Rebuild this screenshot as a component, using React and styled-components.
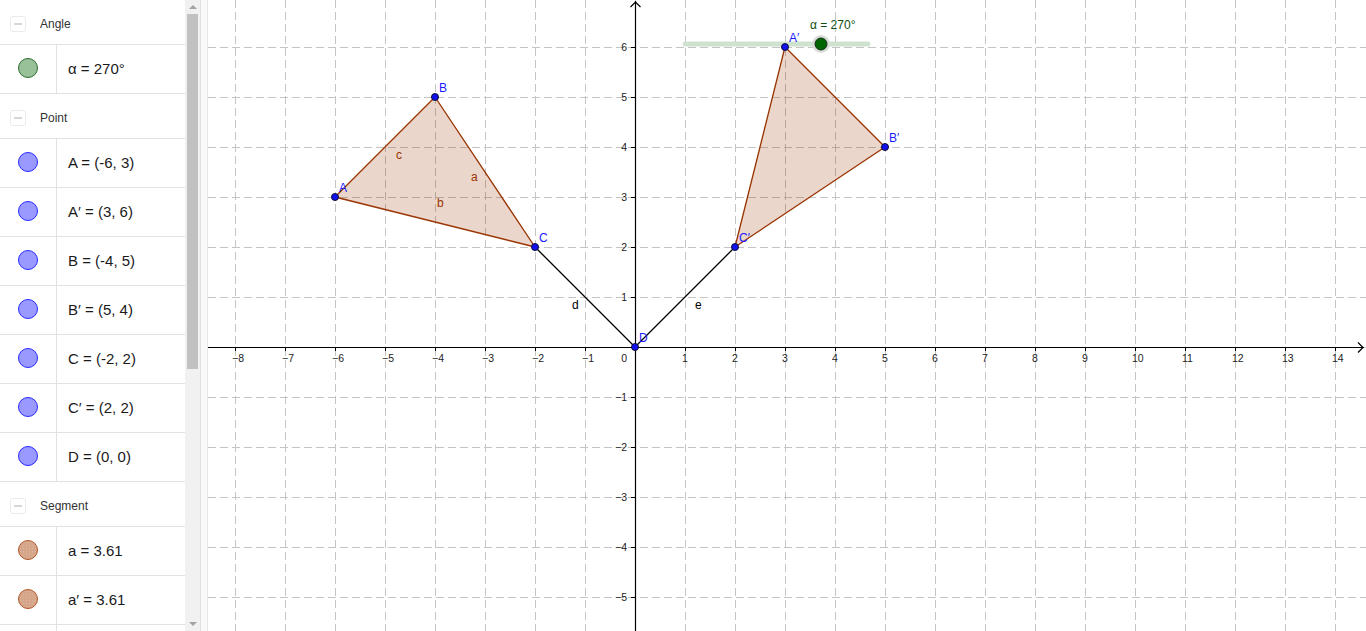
import React from 'react';
import styled, { createGlobalStyle } from 'styled-components';

const GlobalStyle = createGlobalStyle`
  html, body {
    margin: 0;
    padding: 0;
    overflow: hidden;
    background: #fff;
  }
  body {
    font-family: "Liberation Sans", Arial, sans-serif;
  }
`;

// origin of the graphics view in local svg coords (view starts at x=208)
const OX = 427;
const OY = 347;
const UNIT = 50;
const X = (u) => OX + u * UNIT;
const Y = (v) => OY - v * UNIT;

const groups = [
  {
    title: 'Angle',
    items: [{ kind: 'angle', label: 'α = 270°' }],
  },
  {
    title: 'Point',
    items: [
      { kind: 'point', label: 'A = (-6, 3)' },
      { kind: 'point', label: 'A′ = (3, 6)' },
      { kind: 'point', label: 'B = (-4, 5)' },
      { kind: 'point', label: 'B′ = (5, 4)' },
      { kind: 'point', label: 'C = (-2, 2)' },
      { kind: 'point', label: 'C′ = (2, 2)' },
      { kind: 'point', label: 'D = (0, 0)' },
    ],
  },
  {
    title: 'Segment',
    items: [
      { kind: 'segment', label: 'a = 3.61' },
      { kind: 'segment', label: 'a′ = 3.61' },
      // next row only peeks in at the bottom edge
      { kind: 'segment', label: '', hidden: true },
    ],
  },
];

const swatch = {
  angle: { fill: '#99c199', border: '#2f6b2f' },
  point: { fill: '#9999ff', border: '#2a2aff' },
  segment: { fill: '#d6a68a', border: '#b0562a' },
};

const Page = styled.div`
  display: flex;
  width: 1366px;
  height: 631px;
  overflow: hidden;
`;

const AlgebraPanel = styled.div`
  display: flex;
  width: 200px;
  height: 631px;
  flex: none;
`;

const AlgebraList = styled.div`
  width: 185px;
  overflow: hidden;
`;

const GroupHeader = styled.div`
  box-sizing: border-box;
  display: flex;
  align-items: center;
  height: 45px;
  padding-top: 4px;
  border-bottom: 1px solid #e2e2e2;
  font-size: 12px;
  color: #333;
`;

const Toggle = styled.div`
  box-sizing: border-box;
  width: 16px;
  height: 16px;
  margin: 0 14px 0 10px;
  border: 1px solid #ebebeb;
  border-radius: 3px;
  display: flex;
  align-items: center;
  justify-content: center;
  &::after {
    content: '';
    width: 8px;
    height: 2px;
    background: #d6d6d6;
  }
`;

const Row = styled.div`
  box-sizing: border-box;
  display: flex;
  height: 49px;
  padding-bottom: 2px;
  border-bottom: 1px solid #e2e2e2;
`;

const MarbleCell = styled.div`
  width: 56px;
  margin-bottom: -2px;
  border-right: 1px solid #e2e2e2;
  display: flex;
  align-items: center;
  justify-content: center;
  padding-bottom: 2px;
  flex: none;
`;

const Marble = styled.div`
  box-sizing: border-box;
  width: 20px;
  height: 20px;
  border-radius: 50%;
  visibility: ${(p) => (p.$hidden ? 'hidden' : 'visible')};
  background-color: ${(p) => p.$fill};
  border: 1px solid ${(p) => p.$border};
  background-image: ${(p) =>
    p.$dotted ? 'radial-gradient(rgba(255,255,255,0.18) 0.6px, transparent 0.8px)' : 'none'};
  background-size: 3px 3px;
`;

const RowText = styled.div`
  display: flex;
  align-items: center;
  padding-left: 11px;
  font-size: 15px;
  color: #1a1a1a;
  white-space: nowrap;
`;

const Scrollbar = styled.div`
  width: 15px;
  background: #f1f1f1;
  display: flex;
  flex-direction: column;
  align-items: center;
  flex: none;
`;

const Arrow = styled.div`
  height: 14px;
  display: flex;
  align-items: center;
  justify-content: center;
  &::after {
    content: '';
    border-left: 4px solid transparent;
    border-right: 4px solid transparent;
    ${(p) => (p.$down ? 'border-top' : 'border-bottom')}: 4px solid #a3a3a3;
  }
`;

const Thumb = styled.div`
  width: 11px;
  height: 355px;
  background: #c1c1c1;
`;

const Track = styled.div`
  flex: 1;
`;

const Splitter = styled.div`
  width: 6px;
  flex: none;
  background: #f9f9f9;
  border-left: 1px solid #e0e0e0;
  border-right: 1px solid #e8e8e8;
`;

const Graphics = styled.div`
  flex: 1;
  height: 631px;
  background: #fff;
  svg {
    display: block;
    font-family: "Liberation Sans", Arial, sans-serif;
  }
`;

const A = { x: -6, y: 3 };
const B = { x: -4, y: 5 };
const C = { x: -2, y: 2 };
const A2 = { x: 3, y: 6 };
const B2 = { x: 5, y: 4 };
const C2 = { x: 2, y: 2 };
const D = { x: 0, y: 0 };

const tri = (p) => p.map((q) => `${X(q.x)},${Y(q.y)}`).join(' ');
const minus = (n) => (n < 0 ? `\u2212${-n}` : `${n}`);

function GraphView() {
  const W = 1158;
  const H = 631;
  const xs = [];
  for (let n = -8; n <= 14; n++) xs.push(n);
  const ys = [];
  for (let n = -5; n <= 6; n++) ys.push(n);

  const points = [
    { p: A, name: 'A' },
    { p: A2, name: 'A\u2032' },
    { p: B, name: 'B' },
    { p: B2, name: 'B\u2032' },
    { p: C, name: 'C' },
    { p: C2, name: 'C\u2032' },
    { p: D, name: 'D' },
  ];

  return (
    <svg width={W} height={H} viewBox={`0 0 ${W} ${H}`}>
      <g stroke="#c4c4c4" strokeWidth="1" strokeDasharray="8 4">
        {xs.map((n) => (
          <line key={`gx${n}`} x1={X(n) + 0.5} y1={0} x2={X(n) + 0.5} y2={H} />
        ))}
        {ys.map((n) => (
          <line key={`gy${n}`} x1={0} y1={Y(n) + 0.5} x2={W} y2={Y(n) + 0.5} />
        ))}
      </g>

      {/* axes */}
      <g stroke="#000" strokeWidth="1.2" fill="none">
        <line x1={0} y1={OY + 0.5} x2={W - 2} y2={OY + 0.5} />
        <line x1={OX + 0.5} y1={H} x2={OX + 0.5} y2={1} />
        <polyline points={`${W - 8},${OY - 4.5} ${W - 3},${OY + 0.5} ${W - 8},${OY + 5.5}`} />
        <polyline points={`${OX - 4.5},${7} ${OX + 0.5},${2} ${OX + 5.5},${7}`} />
        {xs.filter((n) => n !== 0).map((n) => (
          <line key={`tx${n}`} x1={X(n) + 0.5} y1={OY} x2={X(n) + 0.5} y2={OY + 4} strokeWidth="1" />
        ))}
        {ys.filter((n) => n !== 0).map((n) => (
          <line key={`ty${n}`} x1={OX - 4} y1={Y(n) + 0.5} x2={OX} y2={Y(n) + 0.5} strokeWidth="1" />
        ))}
      </g>

      <g fontSize="10.5" fill="#222">
        {xs.filter((n) => n !== 0).map((n) => (
          <text key={`lx${n}`} x={X(n) - 3} y={OY + 15}>
            {minus(n)}
          </text>
        ))}
        {ys.filter((n) => n !== 0).map((n) => (
          <text key={`ly${n}`} x={OX - 8} y={Y(n) + 4} textAnchor="end">
            {minus(n)}
          </text>
        ))}
        <text x={OX - 8} y={OY + 15} textAnchor="end">0</text>
      </g>

      {/* triangles */}
      <g fill="rgba(153,51,0,0.2)" stroke="#993300" strokeWidth="1.3" strokeLinejoin="round">
        <polygon points={tri([A, B, C])} />
        <polygon points={tri([A2, B2, C2])} />
      </g>

      {/* segments d and e */}
      <g stroke="#000" strokeWidth="1.3">
        <line x1={X(C.x)} y1={Y(C.y)} x2={X(D.x)} y2={Y(D.y)} />
        <line x1={X(D.x)} y1={Y(D.y)} x2={X(C2.x)} y2={Y(C2.y)} />
      </g>

      <g fontSize="12" fill="#993300">
        <text x={396 - 208} y={159}>c</text>
        <text x={471 - 208} y={181}>a</text>
        <text x={437 - 208} y={207}>b</text>
      </g>
      <g fontSize="12" fill="#000">
        <text x={572 - 208} y={309}>d</text>
        <text x={695 - 208} y={309}>e</text>
      </g>

      {/* slider */}
      <line x1={X(1)} y1={44} x2={X(4.66)} y2={44} stroke="#cfe1cf" strokeWidth="5" strokeLinecap="round" />
      <circle cx={821 - 208} cy={44} r={9} fill="#d7ddd7" />
      <circle cx={821 - 208} cy={44} r={6} fill="#006400" stroke="#1c2b1c" strokeWidth="1" />
      <text x={810 - 208} y={29} fontSize="12" fill="#0d4f0d">α = 270°</text>

      {/* points */}
      {points.map(({ p, name }) => (
        <g key={name}>
          <circle cx={X(p.x)} cy={Y(p.y)} r={3.5} fill="#1111ee" stroke="#101030" strokeWidth="1" />
          <text x={X(p.x) + 4} y={Y(p.y) - 5} fontSize="12" fill="#1a1aff">
            {name}
          </text>
        </g>
      ))}
    </svg>
  );
}

export default function App() {
  return (
    <>
      <GlobalStyle />
      <Page>
        <AlgebraPanel>
          <AlgebraList>
            {groups.map((g) => (
              <div key={g.title}>
                <GroupHeader>
                  <Toggle />
                  {g.title}
                </GroupHeader>
                {g.items.map((it, i) => (
                  <Row key={`${g.title}-${i}`}>
                    <MarbleCell>
                      <Marble
                        $fill={swatch[it.kind].fill}
                        $border={swatch[it.kind].border}
                        $dotted={it.kind === 'segment'}
                        $hidden={it.hidden}
                      />
                    </MarbleCell>
                    {it.label && <RowText>{it.label}</RowText>}
                  </Row>
                ))}
              </div>
            ))}
          </AlgebraList>
          <Scrollbar>
            <Arrow />
            <Thumb />
            <Track />
            <Arrow $down />
          </Scrollbar>
        </AlgebraPanel>
        <Splitter />
        <Graphics>
          <GraphView />
        </Graphics>
      </Page>
    </>
  );
}
